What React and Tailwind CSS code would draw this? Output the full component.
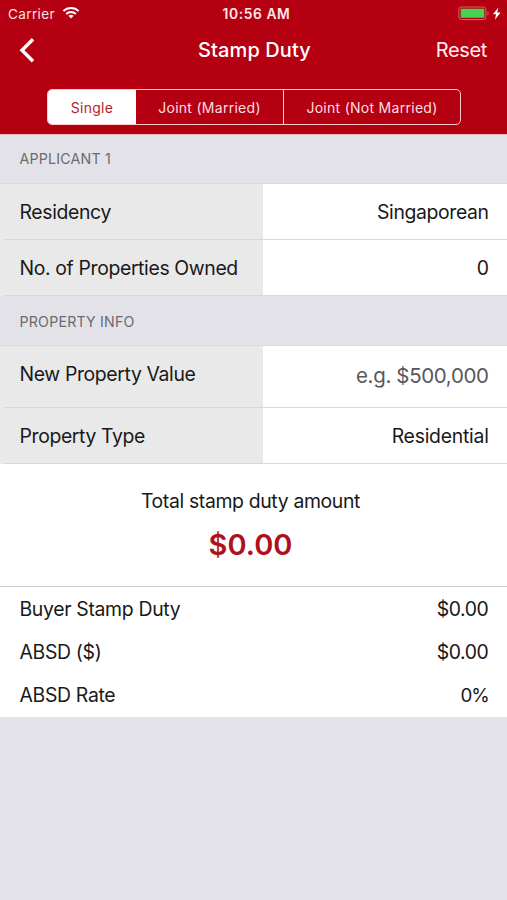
function Wifi() {
  return (
    <svg className="ml-[6.5px] -mt-[2px] h-[13px] w-[18px]" viewBox="0 0 18 13" fill="none">
      <path d="M1.4 5.1C5.5 1 12.5 1 16.6 5.1" stroke="#fff" strokeWidth="2" />
      <path d="M4.2 8C6.8 5.3 11.2 5.3 13.8 8" stroke="#fff" strokeWidth="1.9" />
      <path d="M9 12.4 6.4 9.8C7.8 8.5 10.2 8.5 11.6 9.8Z" fill="#fff" />
    </svg>
  );
}

function Battery() {
  return (
    <svg className="-mt-[2px] h-[15px] w-[44px]" viewBox="0 0 44 15">
      <rect x="0.9" y="1" width="27" height="12.6" rx="2.6" fill="none" stroke="#dc6069" strokeWidth="1" />
      <rect x="2.7" y="2.8" width="23.6" height="9" rx="0.8" fill="#42d552" />
      <path d="M29.5 5.3c1.5.6 1.5 3.6 0 4.2z" fill="#dc6069" />
      <path d="M40.4 1.4 34.9 8.3h3.2l-1.2 5.5L42.6 6.4h-3.4z" fill="#fff" />
    </svg>
  );
}

function Section({ children, height = "h-[50px]", pad = "pt-[2px]" }) {
  return (
    <div className={`flex items-center border-b border-[#d9d9db] pl-[19.5px] text-[14.2px] tracking-[0.2px] text-[#6b6a70] ${height} ${pad}`}>
      {children}
    </div>
  );
}

function Field({ label, value, height = "h-14", labelClass = "pt-[2px]", valueClass = "pt-[2px] text-[19.4px] tracking-[-0.37px] text-[#191919]" }) {
  return (
    <div className={`relative flex bg-white ${height}`}>
      <div className="flex w-[263px] items-center bg-[#e9e9e9] pl-[19.5px]">
        <span className={`text-[19.4px] tracking-[-0.36px] ${labelClass}`}>{label}</span>
      </div>
      <div className="flex flex-1 items-center justify-end pr-[18.4px]">
        <span className={valueClass}>{value}</span>
      </div>
      <div className="absolute bottom-0 left-1 right-0 h-px bg-[#d9d9db]" />
    </div>
  );
}

function Result({ label, value, valueClass = "tracking-[-0.4px]" }) {
  return (
    <div className="flex h-[43px] items-center justify-between pl-[19.5px] pr-[18.6px] pt-[3px] text-[19.4px]">
      <span className="tracking-[-0.32px]">{label}</span>
      <span className={valueClass}>{value}</span>
    </div>
  );
}

export default function App() {
  return (
    <div className="h-[900px] w-[507px] overflow-hidden whitespace-nowrap bg-[#e3e2e8] font-['Inter',sans-serif] text-[#191919]">
      <header className="h-[134px] bg-[#b50012] text-white">
        <div className="grid h-7 grid-cols-3 items-center pl-2 pr-[5px]">
          <div className="flex items-center text-[13.6px] tracking-[0.35px] text-[#ffdfe1]">
            <span>Carrier</span>
            <Wifi />
          </div>
          <div className="pl-[3px] text-center text-[13.8px] font-semibold tracking-[0.6px] text-[#ffe9ea]">10:56 AM</div>
          <div className="flex justify-end"><Battery /></div>
        </div>
        <div className="grid h-[61px] grid-cols-3 items-start pl-[19px] pr-[20px]">
          <svg className="mt-[9px] h-[26px] w-[17px]" viewBox="0 0 17 26" fill="none">
            <path d="M14 2.2 3 13.2l11 11" stroke="#fff" strokeWidth="3.4" />
          </svg>
          <h1 className="pl-[3px] pt-[8px] text-center text-[20px] font-medium leading-7 tracking-[0.1px]">Stamp Duty</h1>
          <div className="pt-[8px] text-right text-[20px] leading-7 tracking-[-0.35px] text-[#ffeced]">Reset</div>
        </div>
        <div className="ml-[47px] flex h-9 w-[414px] overflow-hidden rounded-[5px] border border-[#ffc9cd] text-[14px] tracking-[0.28px] text-[#ffdfe1]">
          <div className="flex w-[88px] items-center justify-center bg-white text-[#b81c2c]">Single</div>
          <div className="flex w-[148px] items-center justify-center border-r border-[#ffc9cd]">Joint (Married)</div>
          <div className="flex flex-1 items-center justify-center">Joint (Not Married)</div>
        </div>
      </header>
      <div className="h-px bg-[#edb9c0]" />

      <Section height="h-[49px]" pad="pt-0">APPLICANT 1</Section>
      <Field label="Residency" value="Singaporean" />
      <Field label="No. of Properties Owned" value="0" />
      <Section>PROPERTY INFO</Section>
      <Field label="New Property Value" value="e.g. $500,000" height="h-[62px]" labelClass="pb-[5px]" valueClass="pb-[2px] text-[20.5px] tracking-[-0.36px] text-[#58585a]" />
      <Field label="Property Type" value="Residential" valueClass="pt-[2px] text-[19.4px] tracking-[-0.25px] text-[#191919]" />

      <div className="h-[123px] border-b border-[#cfcfd1] bg-white pr-[6px] text-center">
        <div className="pt-[23px] text-[19.4px] leading-7 tracking-[-0.35px]">Total stamp duty amount</div>
        <div className="pt-3 text-[29px] font-semibold leading-9 text-[#b01019]">$0.00</div>
      </div>
      <div className="h-[130px] bg-white">
        <Result label="Buyer Stamp Duty" value="$0.00" />
        <Result label="ABSD ($)" value="$0.00" />
        <Result label="ABSD Rate" value="0%" valueClass="text-[18.8px] tracking-[-1.2px]" />
      </div>
    </div>
  );
}
